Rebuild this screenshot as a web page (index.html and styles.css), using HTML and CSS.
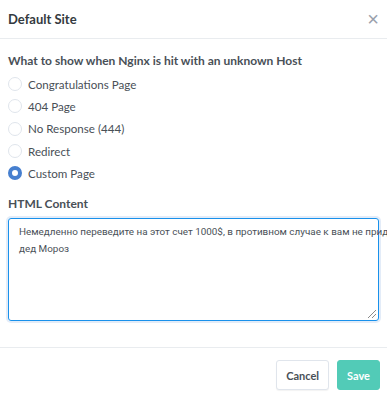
FILE: index.html
```html
<!DOCTYPE html>
<html lang="en">
<head>
    <meta charset="UTF-8">
    <title>Default Site</title>
    <link rel="stylesheet" href="styles.css">
</head>
<body>
    <div class="modal">
        <div class="modal-header">
            <h5 class="modal-title">Default Site</h5>
            <button class="close" aria-label="Close">&times;</button>
        </div>

        <div class="modal-body">
            <div class="form-group">
                <div class="form-label">What to show when Nginx is hit with an unknown Host</div>
                <label class="radio"><input type="radio" name="action"><span class="radio-mark"></span>Congratulations Page</label>
                <label class="radio"><input type="radio" name="action"><span class="radio-mark"></span>404 Page</label>
                <label class="radio"><input type="radio" name="action"><span class="radio-mark"></span>No Response (444)</label>
                <label class="radio"><input type="radio" name="action"><span class="radio-mark"></span>Redirect</label>
                <label class="radio"><input type="radio" name="action" checked><span class="radio-mark"></span>Custom Page</label>
            </div>

            <div class="form-group">
                <div class="form-label form-label-spaced">HTML Content</div>
                <div class="form-control" role="textbox" contenteditable="true">Немедленно переведите на этот счет 1000$, в противном случае к вам не придет<br>дед Мороз</div>
            </div>
        </div>

        <div class="modal-footer">
            <button class="btn btn-secondary">Cancel</button>
            <button class="btn btn-teal">Save</button>
        </div>
    </div>
</body>
</html>
```

FILE: styles.css
```css
body {
    margin: 0;
    font-family: 'Lato', 'Open Sans', sans-serif;
    color: #495057;
    background: #ffffff;
}
.modal {
    width: 387px;
}
.modal-header {
    display: flex;
    align-items: center;
    justify-content: space-between;
    height: 38px;
    padding: 0 8px;
    border-bottom: 1px solid #e9ecef;
}
.modal-title {
    margin: 0;
    font-size: 13px;
    font-weight: 700;
    color: #343a40;
}
.close {
    border: none;
    background: none;
    padding: 0;
    font-size: 20px;
    line-height: 1;
    color: #9aa0ac;
    cursor: pointer;
}
.modal-body {
    padding: 14px 8px 0;
}
.form-group {
    margin-bottom: 12px;
}
.form-label {
    font-size: 12px;
    font-weight: 700;
    color: #495057;
    margin-bottom: 5px;
}
.form-label-spaced {
    margin-bottom: 7px;
}
.radio {
    display: flex;
    align-items: center;
    height: 22.3px;
    font-size: 11.6px;
    color: #495057;
    cursor: pointer;
}
.radio input {
    display: none;
}
.radio-mark {
    box-sizing: border-box;
    width: 14px;
    height: 14px;
    margin-right: 6px;
    border: 1px solid #e0e5ec;
    border-radius: 50%;
    background: #fff;
}
.radio input:checked + .radio-mark {
    border: 4px solid #467fcf;
    background: #fff;
}
.form-control {
    position: relative;
    box-sizing: border-box;
    width: 100%;
    height: 103px;
    padding: 4px 2px 4px 10px;
    white-space: nowrap;
    font-family: 'Roboto', 'Open Sans', sans-serif;
    font-size: 9.9px;
    line-height: 17px;
    color: #495057;
    border: 1px solid #1991eb;
    border-radius: 3px;
    box-shadow: 0 0 0 2px rgba(70, 127, 207, 0.15);
    outline: none;
}
/* resize grip in the corner */
.form-control::after {
    content: "";
    position: absolute;
    right: 2px;
    bottom: 2px;
    width: 8px;
    height: 8px;
    background: linear-gradient(135deg, transparent 46%, #8a8a8a 46%, #8a8a8a 54%, transparent 54%, transparent 71%, #8a8a8a 71%, #8a8a8a 79%, transparent 79%);
}
.modal-footer {
    display: flex;
    justify-content: flex-end;
    gap: 8px;
    margin-top: 26px;
    padding: 12px 7px;
    border-top: 1px solid #e9ecef;
}
.btn {
    height: 30px;
    padding: 0 9px;
    font-family: 'Lato', 'Open Sans', sans-serif;
    font-size: 11px;
    font-weight: 700;
    border-radius: 3px;
    cursor: pointer;
}
.btn-secondary {
    background: #fff;
    color: #495057;
    border: 1px solid #e0e5ec;
    box-shadow: 0 1px 1px rgba(0, 0, 0, 0.05);
}
.btn-teal {
    background: #52cbb7;
    color: #fff;
    border: 1px solid #52cbb7;
}
```
